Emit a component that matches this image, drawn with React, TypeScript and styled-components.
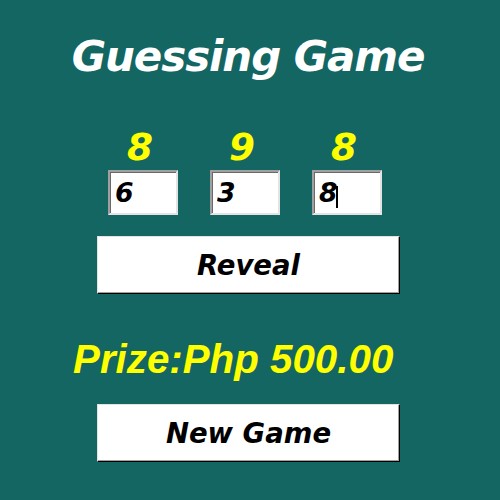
import React from "react";
import styled, { createGlobalStyle } from "styled-components";

const Global = createGlobalStyle`
  html, body { margin: 0; padding: 0; background: #136662; }
  body { width: 500px; height: 500px; overflow: hidden; }
`;

const Form = styled.div`
  width: 500px;
  height: 500px;
  background: #136662;
  display: flex;
  flex-direction: column;
  font-family: "DejaVu Sans", Verdana, sans-serif;
`;

const Title = styled.h1`
  margin: 31px 0 0 0;
  padding-right: 4px;
  height: 52px;
  line-height: 52px;
  font-size: 42px;
  letter-spacing: -1.1px;
  font-weight: bold;
  font-style: italic;
  color: #ffffff;
  text-align: center;
`;

const Slots = styled.div`
  margin: 44px 0 0 108px;
  display: grid;
  grid-template-columns: repeat(3, 70px);
  column-gap: 32px;
`;

const Slot = styled.div`
  display: flex;
  flex-direction: column;
  align-items: center;
`;

const Secret = styled.div`
  height: 40px;
  margin-bottom: 3px;
  line-height: 40px;
  font-size: 37.33px;
  font-weight: bold;
  font-style: italic;
  color: #ffff00;
  padding-right: 6px;
`;

const Field = styled.div`
  position: relative;
  width: 70px;
  height: 45px;
`;

const Guess = styled.input`
  box-sizing: border-box;
  width: 70px;
  height: 45px;
  margin: 0;
  padding: 0 0 0 5px;
  border-style: solid;
  border-width: 2px;
  border-color: #a0a0a0 #e3e3e3 #e3e3e3 #a0a0a0;
  box-shadow: inset 1px 1px 0 #696969;
  background: #ffffff;
  font-family: "DejaVu Sans", Verdana, sans-serif;
  font-size: 26.67px;
  font-weight: bold;
  font-style: italic;
  color: #000000;
  outline: none;
  caret-color: transparent;
`;

const Caret = styled.span`
  position: absolute;
  left: 24px;
  top: 16px;
  width: 2px;
  height: 22px;
  background: #000000;
`;

const Button = styled.button<{ $top: number }>`
  box-sizing: border-box;
  margin: ${(p) => p.$top}px 0 0 97px;
  width: 303px;
  height: 58px;
  padding: 0;
  background: #ffffff;
  border-style: solid;
  border-width: 1px;
  border-color: #e3e3e3 #000000 #000000 #e3e3e3;
  box-shadow: inset -1px -1px 0 #a0a0a0;
  font-family: "DejaVu Sans", Verdana, sans-serif;
  font-size: 27.5px;
  font-weight: bold;
  font-style: italic;
  color: #000000;
  cursor: pointer;
`;

const Prize = styled.div`
  margin: 43px 0 0 73px;
  height: 46px;
  line-height: 46px;
  font-family: "Liberation Sans", Arial, sans-serif;
  font-size: 40.3px;
  font-weight: bold;
  font-style: italic;
  color: #ffff00;
`;

const secrets = ["8", "9", "8"];
const guesses = ["6", "3", "8"];

export default function App() {
  return (
    <Form>
      <Global />
      <Title>Guessing Game</Title>
      <Slots>
        {secrets.map((s, i) => (
          <Slot key={i}>
            <Secret>{s}</Secret>
            <Field>
              <Guess defaultValue={guesses[i]} />
              {i === 2 && <Caret />}
            </Field>
          </Slot>
        ))}
      </Slots>
      <Button $top={21}>Reveal</Button>
      <Prize>Prize:Php 500.00</Prize>
      <Button $top={21}>New Game</Button>
    </Form>
  );
}
